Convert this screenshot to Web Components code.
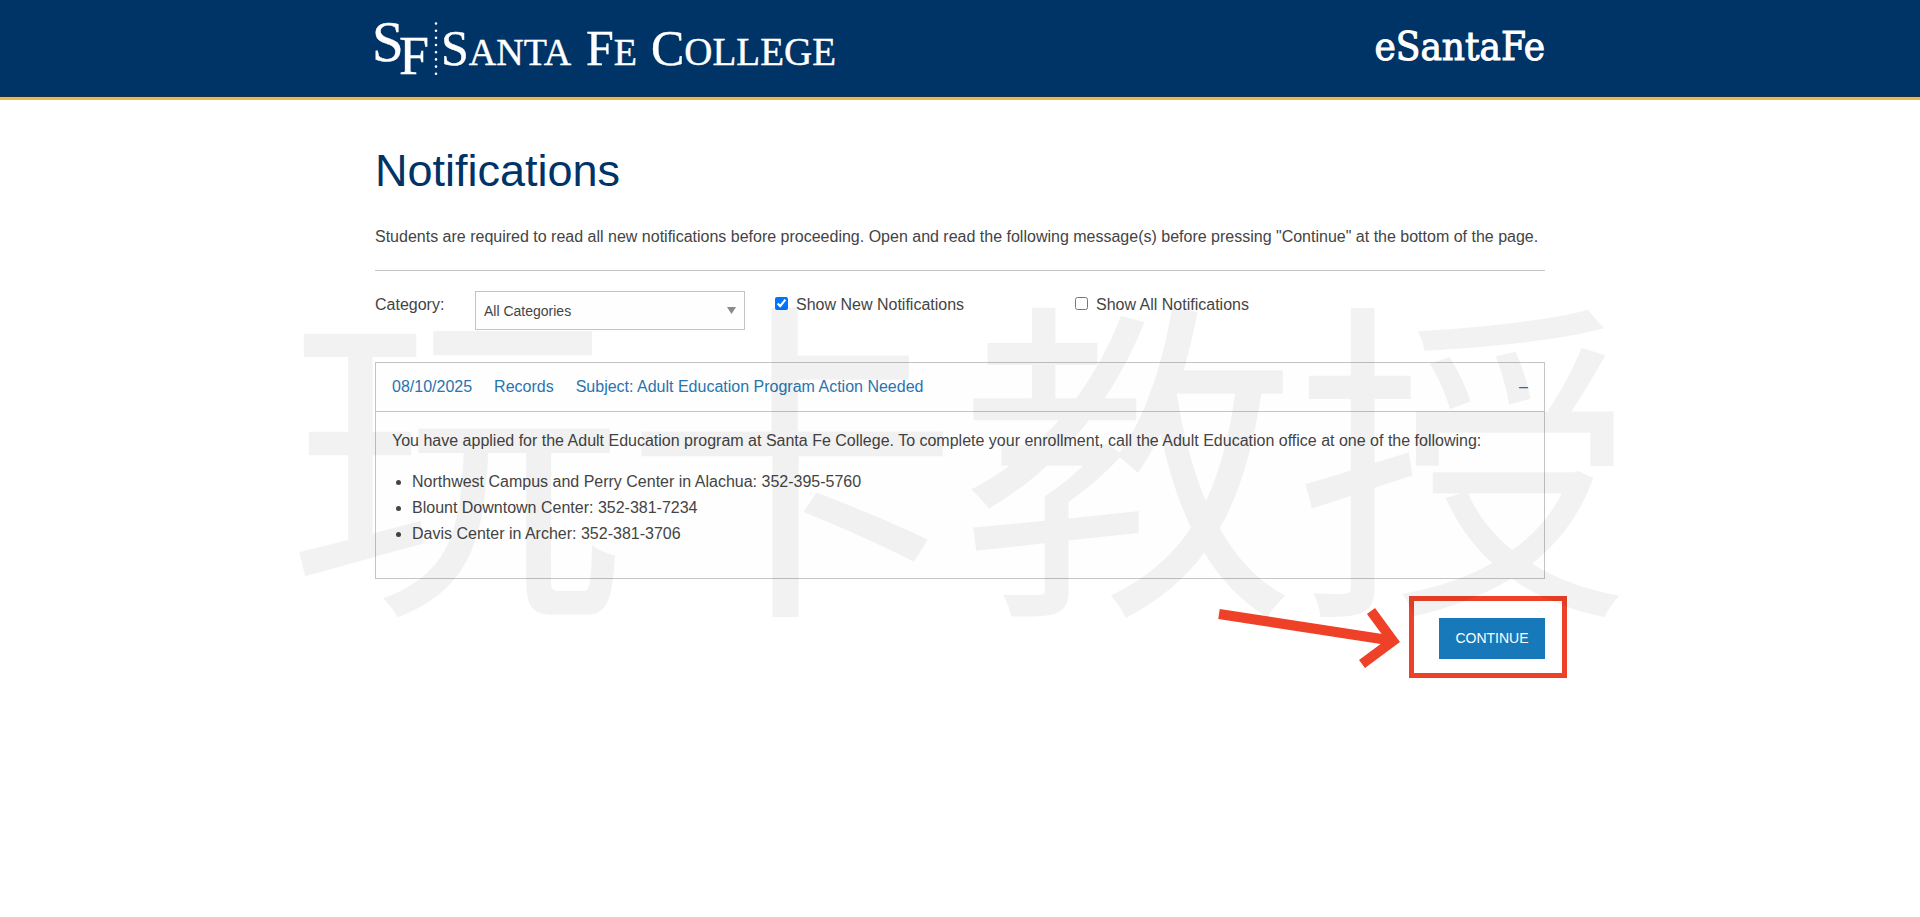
<!DOCTYPE html>
<html lang="en">
<head>
<meta charset="utf-8">
<meta name="viewport" content="width=device-width, initial-scale=1">
<title>Notifications - eSantaFe</title>
<style>
  html { background: #fff; }
  body { margin: 0; font: 16px/26px "Liberation Sans", Arial, sans-serif; color: #444; }
</style>
</head>
<body>
<sf-page></sf-page>

<template id="t-page">
  <style>
    :host { display: block; overflow-x: clip; }
    main { position: relative; max-width: 1170px; margin: 0 auto; padding: 43px 16px 48px; }
    h1 { margin: 0; font-size: 45px; line-height: 56px; font-weight: 400; color: #003366; }
    .intro { margin: 25px 0 20px; }
    hr { margin: 0 0 20px; border: 0; border-top: 1px solid #c4c4c4; }
    .actions { display: flex; justify-content: flex-end; margin-top: 39px; }
  </style>
  <sf-header></sf-header>
  <main>
    <h1>Notifications</h1>
    <p class="intro">Students are required to read all new notifications before proceeding. Open and read the following message(s) before pressing "Continue" at the bottom of the page.</p>
    <hr>
    <sf-filters></sf-filters>
    <sf-notice>
      <span slot="date">08/10/2025</span>
      <span slot="category">Records</span>
      <span slot="subject">Subject: Adult Education Program Action Needed</span>
      <sf-message></sf-message>
    </sf-notice>
    <div class="actions"><sf-continue>CONTINUE</sf-continue></div>
    <sf-watermark>玩卡教授</sf-watermark>
  </main>
</template>

<template id="t-header">
  <style>
    :host { display: block; background: #003366; border-bottom: 3px solid #e9b949; }
    .bar { display: flex; justify-content: space-between; align-items: center; max-width: 1170px; margin: 0 auto; padding: 0 16px; height: 96px; }
    :host::after { content: ""; display: block; height: 1px; background: #1b3040; }
    .site { color: #fff; text-decoration: none; font: 40px/48px "Roboto Slab", "DejaVu Serif Condensed", "DejaVu Serif", serif; padding-bottom: 4px; -webkit-text-stroke: 1px #fff; }
  </style>
  <div class="bar">
    <sf-logo></sf-logo>
    <a class="site" href="#">eSantaFe</a>
  </div>
</template>

<template id="t-logo">
  <style>
    :host { display: block; margin-left: -4px; }
    a { display: block; color: #fff; text-decoration: none; font-family: "Liberation Serif", serif; height: 96px; }
    svg { display: block; }
    text { fill: #fff; stroke: #fff; stroke-width: 0.4px; }
  </style>
  <a href="#" aria-label="Santa Fe College">
    <svg width="480" height="96" viewBox="0 0 480 96">
      <text x="1" y="61" font-size="57">S</text>
      <text x="28" y="74" font-size="54">F</text>
      <path d="M65 23.500V75" stroke="#fff" stroke-width="2.600" stroke-linecap="round" stroke-dasharray="0 7.180" fill="none"/>
      <text x="70" y="65" font-size="50">S<tspan font-size="38">ANTA</tspan></text>
      <text x="215" y="65" font-size="50">F<tspan font-size="38">E</tspan></text>
      <text x="280" y="65" font-size="50">C<tspan font-size="39">OLLEGE</tspan></text>
    </svg>
  </a>
</template>

<template id="t-filters">
  <style>
    :host { display: grid; grid-template-columns: 100px 270px 300px 1fr; margin-bottom: 32px; align-items: start; }
    label { padding-top: 1px; }
    .pick { position: relative; display: block; }
    select { appearance: none; box-sizing: border-box; display: block; width: 100%; height: 39px; margin: 0; padding: 0 24px 0 8px; border: 1px solid #c4c4c4; border-radius: 0; background: #fefefe; color: #444; font: 14px/20px "Liberation Sans", Arial, sans-serif; }
    .pick svg { position: absolute; right: 9px; top: 16px; pointer-events: none; }
    .tick { display: flex; align-items: flex-start; gap: 8px; margin-left: 30px; }
    input { margin: 5px 0 0; width: 13px; height: 13px; accent-color: #0075ff; }
  </style>
  <label for="category">Category:</label>
  <span class="pick">
    <select id="category"><option>All Categories</option></select>
    <svg width="9" height="7" viewBox="0 0 9 7"><path d="M0 0h9L4.500 7z" fill="#8a8a8a"/></svg>
  </span>
  <label class="tick"><input type="checkbox" checked>Show New Notifications</label>
  <label class="tick"><input type="checkbox">Show All Notifications</label>
</template>

<template id="t-notice">
  <style>
    :host { display: block; border: 1px solid #c4c4c4; background: #fefefe; }
    button { display: flex; align-items: center; gap: 22px; box-sizing: border-box; width: 100%; margin: 0; padding: 11px 16px 12px; border: 0; border-bottom: 1px solid #c4c4c4; background: none; color: #2874ae; font: 16px/25px "Liberation Sans", Arial, sans-serif; text-align: left; }
    .sign { margin-left: auto; }
    .body { padding: 16px 16px 31px; }
  </style>
  <button type="button" aria-expanded="true">
    <slot name="date"></slot><slot name="category"></slot><slot name="subject"></slot>
    <span class="sign">–</span>
  </button>
  <div class="body"><slot></slot></div>
</template>

<template id="t-message">
  <style>
    :host { display: block; }
    p { margin: 0; }
    ul { margin: 15px 0 0; padding: 0 0 0 20px; }
  </style>
  <p>You have applied for the Adult Education program at Santa Fe College. To complete your enrollment, call the Adult Education office at one of the following:</p>
  <ul>
    <li>Northwest Campus and Perry Center in Alachua: 352-395-5760</li>
    <li>Blount Downtown Center: 352-381-7234</li>
    <li>Davis Center in Archer: 352-381-3706</li>
  </ul>
</template>

<template id="t-continue">
  <style>
    :host { display: block; position: relative; }
    button { display: block; margin: 0; padding: 0 15px; min-width: 106px; height: 41px; border: 0; background: #1779ba; color: #fefefe; font: 14px/41px "Liberation Sans", Arial, sans-serif; }
    /* callout frame and arrow lie over the page around the button */
    .frame { position: absolute; inset: -22px -22px -19px -30px; border: 5px solid #ee4127; pointer-events: none; }
    .arrow { position: absolute; right: 145px; top: -13px; pointer-events: none; }
  </style>
  <button type="button"><slot></slot></button>
  <span class="frame"></span>
  <svg class="arrow" width="184" height="64" viewBox="0 0 184 64" fill="none" stroke="#ee4127" stroke-width="10">
    <path d="M3 9L172 35"/>
    <path d="M155 6L177 36L146 59"/>
  </svg>
</template>

<template id="t-watermark">
  <style>
    :host { position: absolute; left: 50%; top: 174px; transform: translateX(-50%); white-space: nowrap; font: 336px/340px "Noto Sans CJK SC", sans-serif; color: rgba(0, 0, 0, 0.05); pointer-events: none; user-select: none; }
  </style>
  <slot></slot>
</template>

<script>
  const define = (name) => customElements.define("sf-" + name, class extends HTMLElement {
    constructor() {
      super();
      this.attachShadow({ mode: "open" })
        .append(document.getElementById("t-" + name).content.cloneNode(true));
    }
  });
  ["header", "logo", "filters", "notice", "message", "continue", "watermark", "page"].forEach(define);
</script>
</body>
</html>
